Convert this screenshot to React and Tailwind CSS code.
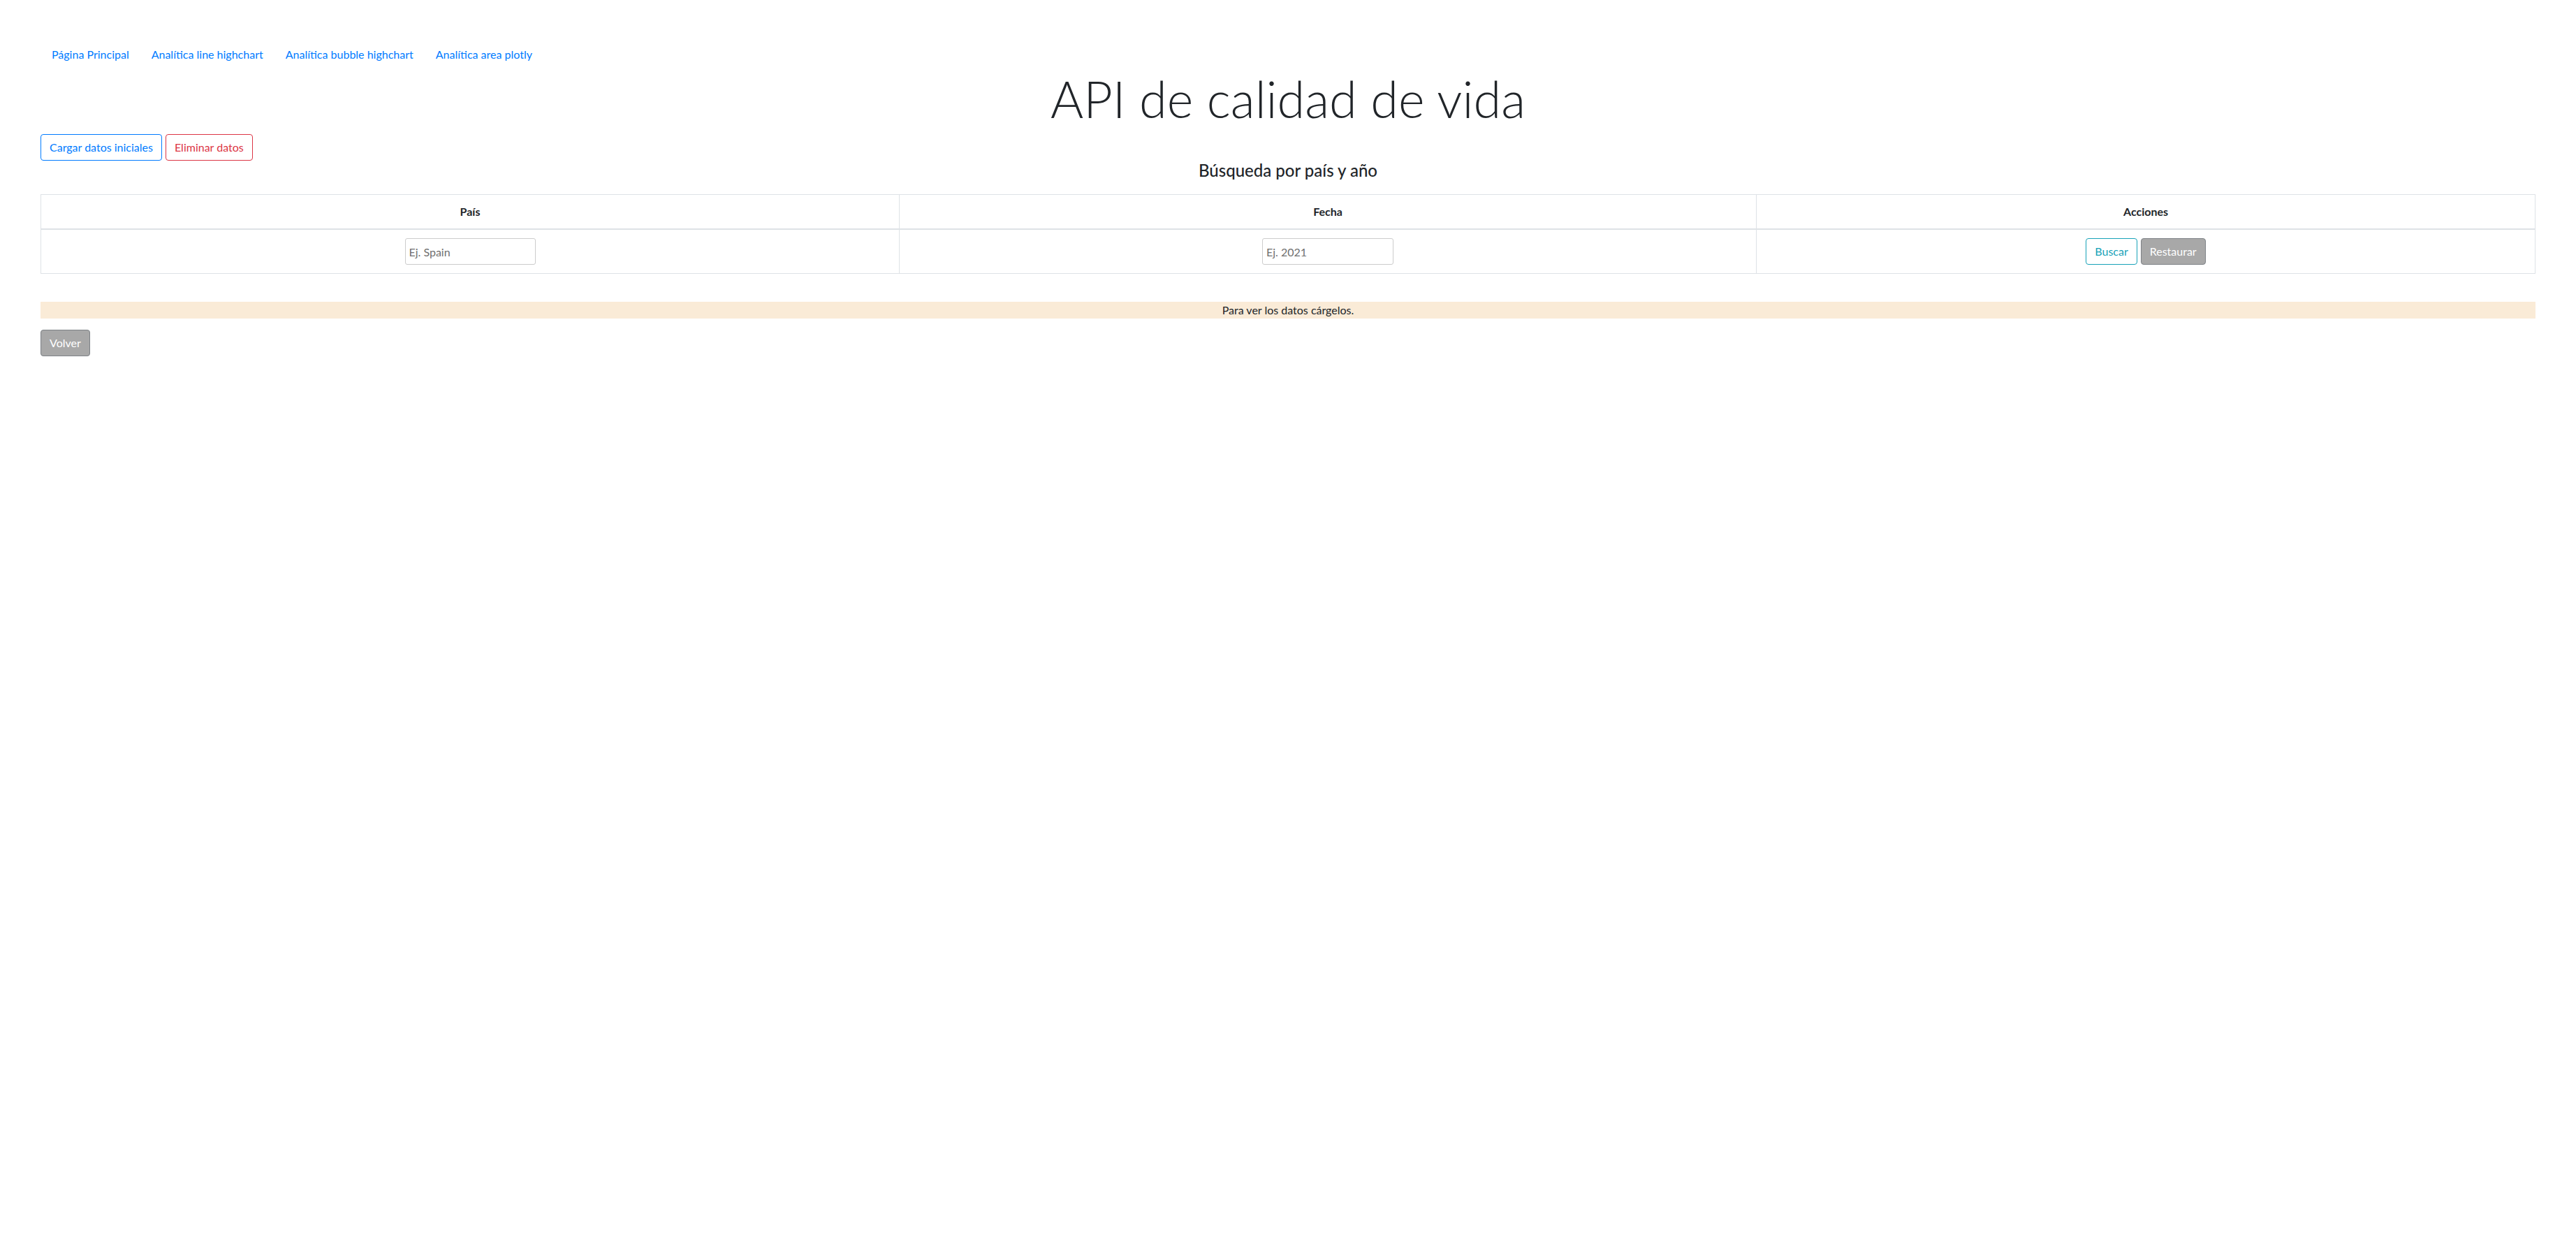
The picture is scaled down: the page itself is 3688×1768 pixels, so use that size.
import { useState } from 'react';

const links = [
    'Página Principal',
    'Analítica line highchart',
    'Analítica bubble highchart',
    'Analítica area plotly',
];

const App = () => {
    const [country, setCountry] = useState('');
    const [year, setYear] = useState('');

    return (
        <div className="min-h-screen bg-white px-[58px] pt-[58px] font-['Lato','Open_Sans',sans-serif] text-base leading-6 text-[#212529]">
            {/* Nav */}
            <ul className="flex">
                {links.map(l => (
                    <li key={l}>
                        <a href="#" className="block px-4 py-2 text-[#007bff]">{l}</a>
                    </li>
                ))}
            </ul>

            <h1 className="mb-2 text-center text-[72px] font-light leading-[1.2]">API de calidad de vida</h1>

            {/* Load / delete */}
            <div className="flex gap-[5px]">
                <button className="rounded-[4px] border border-[#007bff] px-3 py-[6px] leading-6 text-[#007bff]">
                    Cargar datos iniciales
                </button>
                <button className="rounded-[4px] border border-[#dc3545] px-3 py-[6px] leading-6 text-[#dc3545]">
                    Eliminar datos
                </button>
            </div>

            <h4 className="mb-[19px] text-center text-2xl font-medium leading-[1.2]">Búsqueda por país y año</h4>

            {/* Search table */}
            <table className="mb-4 w-full border-collapse border border-[#dee2e6]">
                <thead>
                    <tr>
                        <th className="w-[1229px] border border-b-2 border-[#dee2e6] p-3 text-center font-bold">País</th>
                        <th className="w-[1227px] border border-b-2 border-[#dee2e6] p-3 text-center font-bold">Fecha</th>
                        <th className="border border-b-2 border-[#dee2e6] p-3 text-center font-bold">Acciones</th>
                    </tr>
                </thead>
                <tbody>
                    <tr>
                        <td className="border border-[#dee2e6] p-3 text-center">
                            <input
                                value={country}
                                onChange={(e) => setCountry(e.target.value)}
                                placeholder="Ej. Spain"
                                className="h-[38px] w-[187px] rounded-[3px] border border-[#cccccc] px-[5px] align-middle outline-none placeholder:text-[#6f6f6f]"
                            />
                        </td>
                        <td className="border border-[#dee2e6] p-3 text-center">
                            <input
                                value={year}
                                onChange={(e) => setYear(e.target.value)}
                                placeholder="Ej. 2021"
                                className="h-[38px] w-[188px] rounded-[3px] border border-[#cccccc] px-[5px] align-middle outline-none placeholder:text-[#6f6f6f]"
                            />
                        </td>
                        <td className="border border-[#dee2e6] p-3 text-center">
                            <div className="flex justify-center gap-[5px]">
                                <button className="rounded-[4px] border border-[#17a2b8] px-3 py-[6px] leading-6 text-[#17a2b8]">
                                    Buscar
                                </button>
                                <button disabled className="rounded-[4px] border border-[#7d8186] bg-[#a8a8a8] px-3 py-[6px] leading-6 text-white">
                                    Restaurar
                                </button>
                            </div>
                        </td>
                    </tr>
                </tbody>
            </table>

            <div className="h-6" />

            <div className="mb-4 bg-[#faebd7] text-center leading-6">Para ver los datos cárgelos.</div>

            <button disabled className="rounded-[4px] border border-[#7d8186] bg-[#a8a8a8] px-3 py-[6px] leading-6 text-white">
                Volver
            </button>
        </div>
    );
};

export default App;
